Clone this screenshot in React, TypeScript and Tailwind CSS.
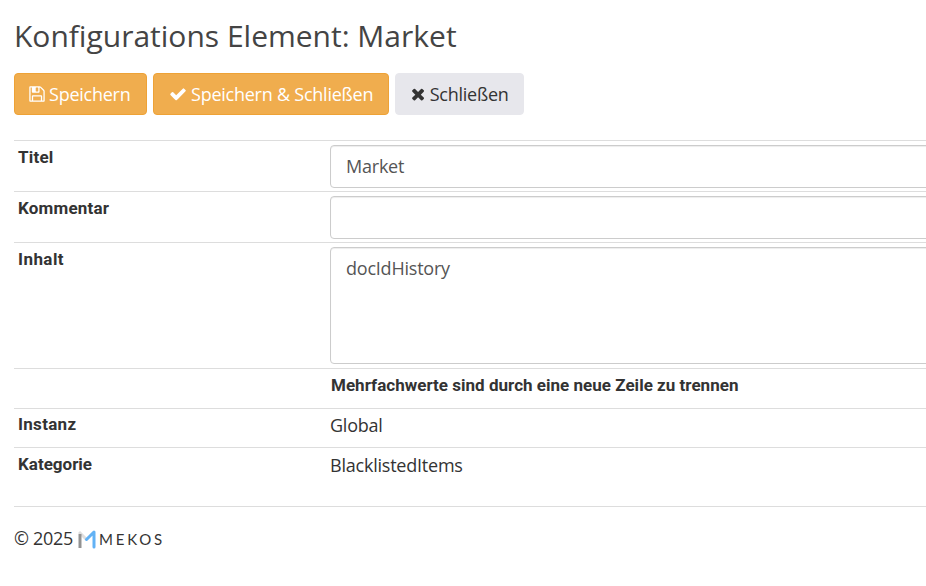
import type { ReactNode } from "react";

function Icon({ d, viewBox, className }: { d: string; viewBox: string; className: string }) {
  return (
    <svg viewBox={viewBox} fill="currentColor" className={`h-[18px] shrink-0 ${className}`}>
      <path d={d} />
    </svg>
  );
}

const SAVE =
  "M512 1536h768v-384h-768v384zm896 0h128v-896q0-14-10-38.5t-20-34.5l-281-281q-10-10-34-20t-39-10v416q0 40-28 68t-68 28h-576q-40 0-68-28t-28-68v-416h-128v1280h128v-416q0-40 28-68t68-28h832q40 0 68 28t28 68v416zm-384-928v-320q0-13-9.5-22.5t-22.5-9.5h-192q-13 0-22.5 9.5t-9.5 22.5v320q0 13 9.5 22.5t22.5 9.5h192q13 0 22.5-9.5t9.5-22.5zm640 32v928q0 40-28 68t-68 28h-1344q-40 0-68-28t-28-68v-1344q0-40 28-68t68-28h928q40 0 88 20t76 48l280 280q28 28 48 76t20 88z";
const CHECK =
  "M1671 566q0 40-28 68l-724 724-136 136q-28 28-68 28t-68-28l-136-136-362-362q-28-28-28-68t28-68l136-136q28-28 68-28t68 28l294 295 656-657q28-28 68-28t68 28l136 136q28 28 28 68z";
const TIMES =
  "M1490 1322q0 40-28 68l-136 136q-28 28-68 28t-68-28l-294-294-294 294q-28 28-68 28t-68-28l-136-136q-28-28-28-68t28-68l294-294-294-294q-28-28-28-68t28-68l136-136q28-28 68-28t68 28l294 294 294-294q28-28 68-28t68 28l136 136q28 28 28 68t-28 68l-294 294 294 294q28 28 28 68z";

function Row({ label, labelClass = "leading-[25px] tracking-[0.2px]", className, children }: { label?: string; labelClass?: string; className: string; children: ReactNode }) {
  return (
    <div className={`flex border-t border-[#ddd] ${className}`}>
      <div className={`w-[316px] shrink-0 pt-1 pl-1 font-['Roboto',sans-serif] text-[17px] font-bold ${labelClass}`}>
        {label}
      </div>
      <div className="grow pt-1">{children}</div>
    </div>
  );
}

const field =
  "block w-[640px] resize-none rounded-[4px] border border-[#ccc] bg-white px-[15px] text-[18px] tracking-[-0.22px] text-[#555] shadow-[inset_0_1px_1px_rgba(0,0,0,0.075)] outline-none";
const button =
  "flex h-[42px] items-center rounded-[4px] border text-[18px] tracking-[-0.24px] whitespace-nowrap";

export default function App() {
  return (
    <main className="h-[586px] w-[926px] overflow-hidden bg-white pl-[14px] font-['Open_Sans',sans-serif] text-[18px] tracking-[-0.22px] text-[#333]">
      <h1 className="h-[73px] pt-[16px] text-[30px] leading-[40px] tracking-normal text-[#444]">
        Konfigurations Element: Market
      </h1>
      <div className="flex gap-[6px]">
        <button className={`${button} w-[133px] gap-[4px] border-[#eea236] bg-[#f0ad4e] pl-[14px] text-white`}>
          <Icon d={SAVE} viewBox="128 0 1536 1792" className="w-[16px]" />
          Speichern
        </button>
        <button className={`${button} w-[236px] gap-[4px] border-[#eea236] bg-[#f0ad4e] pl-[15px] text-white`}>
          <Icon d={CHECK} viewBox="0 0 1792 1792" className="w-[18px]" />
          Speichern &amp; Schließen
        </button>
        <button className={`${button} w-[129px] gap-[4.5px] border-[#e7e7ec] bg-[#e7e7ec] pl-[15px] text-[#333]`}>
          <Icon d={TIMES} viewBox="192 0 1408 1792" className="w-[14.14px]" />
          Schließen
        </button>
      </div>
      <section className="mt-[25px]">
        <Row label="Titel" className="h-[51px]">
          <input className={`${field} h-[43px] pb-[2px]`} defaultValue="Market" />
        </Row>
        <Row label="Kommentar" className="h-[51px]">
          <input className={`${field} h-[43px]`} />
        </Row>
        <Row label="Inhalt" labelClass="leading-[25px] tracking-[0.45px]" className="h-[126px]">
          <textarea className={`${field} h-[117px] pt-[7px] leading-[26px]`} defaultValue="docIdHistory" />
        </Row>
        <Row className="h-[40px]">
          <div className="pl-px font-['Roboto',sans-serif] text-[17px] leading-[25px] font-bold tracking-[0.02px]">
            Mehrfachwerte sind durch eine neue Zeile zu trennen
          </div>
        </Row>
        <Row label="Instanz" labelClass="leading-[23px] tracking-[0.3px]" className="h-[39px]">
          <div className="leading-[25px]">Global</div>
        </Row>
        <Row label="Kategorie" labelClass="leading-[25px] tracking-normal" className="h-[59px]">
          <div className="leading-[26px]">BlacklistedItems</div>
        </Row>
      </section>
      <footer className="flex items-start border-t border-[#ddd] pt-[18px] leading-[26px]">
        <span className="tracking-[-0.3px]">© 2025</span>
        <svg viewBox="0 0 18 19" className="mt-[5px] ml-[5px] h-[19px] w-[18px]" fill="none" strokeWidth="3">
          <path d="M1 2 8 9" stroke="#dedede" />
          <path d="M2 4v14" stroke="#929292" />
          <path d="M8.5 9.5 16 2v15" stroke="#62b2f5" strokeLinejoin="round" strokeLinecap="round" />
        </svg>
        <span className="mt-px ml-[3px] font-['Lato',sans-serif] text-[15px] tracking-[2.8px]">MEKOS</span>
      </footer>
    </main>
  );
}
